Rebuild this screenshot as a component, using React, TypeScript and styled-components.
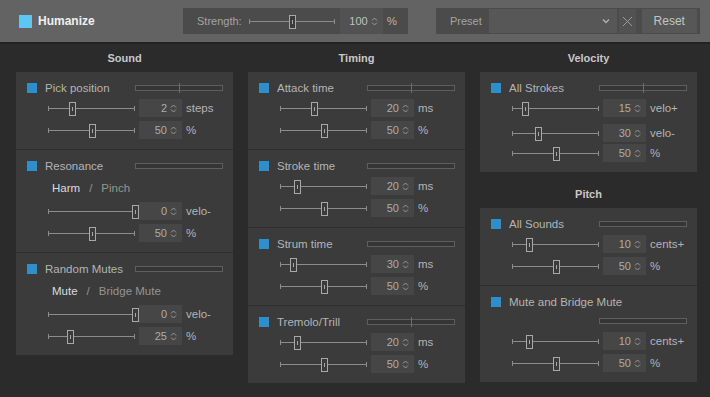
import React from "react"
import styled, { createGlobalStyle } from "styled-components"

const GlobalStyle = createGlobalStyle`
  body {
    margin: 0;
    background: #2b2b2b;
    font-family: "Liberation Sans", Arial, sans-serif;
    font-size: 11px;
    color: #b0b0b0;
  }
`

const Window = styled.div`
  width: 710px;
  height: 397px;
  overflow: hidden;
  background: #2b2b2b;
`
const TopBar = styled.div`
  height: 42px;
  background: #636363;
  border-bottom: 2px solid #232323;
  display: flex;
  align-items: center;
`
const Humanize = styled.div`
  width: 183px;
  padding-left: 19px;
  box-sizing: border-box;
  display: flex;
  align-items: center;
  gap: 6px;
  color: #f0f0f0;
  font-weight: bold;
  font-size: 12px;
`
const BigCheck = styled.span`
  width: 13px;
  height: 13px;
  background: #5cc6f4;
`
const GroupBox = styled.div<{ $width: number; $gap?: number }>`
  width: ${(p) => p.$width}px;
  margin-left: ${(p) => p.$gap ?? 0}px;
  height: 26px;
  background: #4b4b4b;
  display: flex;
  align-items: center;
  padding-left: 14px;
  box-sizing: border-box;
  color: #a4a4a4;
`
const Spacer = styled.span<{ $w: number }>`
  width: ${(p) => p.$w}px;
  flex: none;
`
const TopSpin = styled.div`
  width: 43px;
  height: 26px;
  background: #525252;
  display: flex;
  align-items: center;
  justify-content: flex-end;
  padding-right: 5px;
  box-sizing: border-box;
  color: #c0c0c0;
  margin-left: 5px;
`
const Combo = styled.div`
  width: 128px;
  height: 24px;
  background: #575757;
  display: flex;
  align-items: center;
  justify-content: flex-end;
  padding-right: 7px;
  box-sizing: border-box;
`
const ClearButton = styled.div`
  width: 17px;
  height: 24px;
  margin-left: 2px;
  background: #525252;
  display: flex;
  align-items: center;
  justify-content: center;
`
const ResetButton = styled.div`
  width: 55px;
  height: 24px;
  margin-left: 6px;
  background: #575757;
  display: flex;
  align-items: center;
  justify-content: center;
  color: #c4c4c4;
  font-size: 12px;
`
const Main = styled.div`
  display: grid;
  grid-template-columns: repeat(3, 217px);
  column-gap: 15px;
  padding: 0 16px;
  align-items: start;
`
const Column = styled.div`
  display: flex;
  flex-direction: column;
`
const ColumnTitle = styled.div<{ $top?: number }>`
  height: 28px;
  line-height: 29px;
  margin-top: ${(p) => p.$top ?? 0}px;
  text-align: center;
  font-weight: bold;
  color: #c8c8c8;
`
const Panel = styled.div`
  background: #3b3b3b;
`
const SectionBox = styled.div`
  padding: 8px 0 10px;
  & + & {
    border-top: 1px solid #2e2e2e;
  }
`
const Header = styled.div`
  height: 16px;
  display: flex;
  align-items: center;
`
const Check = styled.span`
  width: 10px;
  height: 10px;
  margin-left: 11px;
  background: #2f8fcd;
  flex: none;
`
const Label = styled.span`
  margin-left: 8px;
  flex: 1;
  color: #b4b4b4;
  font-size: 11.5px;
`
const RangeBar = styled.div`
  position: relative;
  width: 88px;
  height: 6px;
  margin-right: 10px;
  border: 1px solid #5e5e5e;
  background: #353535;
  box-sizing: border-box;
`
const RangeTick = styled.span`
  position: absolute;
  left: 43px;
  top: -3px;
  width: 1px;
  height: 10px;
  background: #6e6e6e;
`
const BarRow = styled.div`
  height: 16px;
  margin-top: 3px;
  display: flex;
  align-items: center;
  justify-content: flex-end;
`
const Body = styled.div`
  display: flex;
  flex-direction: column;
  gap: 4px;
  margin-top: 3px;
`
const SubLabel = styled.div`
  height: 21px;
  display: flex;
  align-items: center;
  padding-left: 36px;
  color: #949494;
  font-size: 11.5px;
`
const Active = styled.span`
  color: #dcdcdc;
`
const Slash = styled.span`
  margin: 0 9px;
`
const Row = styled.div<{ $extra?: number }>`
  height: 18px;
  display: flex;
  align-items: center;
  padding-left: 32px;
  margin-top: ${(p) => p.$extra ?? 0}px;
`
const Track = styled.div<{ $width: number }>`
  position: relative;
  width: ${(p) => p.$width}px;
  height: 18px;
  flex: none;
  &::before {
    content: "";
    position: absolute;
    left: 0;
    right: 0;
    top: 9px;
    height: 1px;
    background: #8c8c8c;
  }
  &::after {
    content: "";
    position: absolute;
    left: 0;
    right: 0;
    top: 7px;
    height: 5px;
    border-left: 1px solid #8c8c8c;
    border-right: 1px solid #8c8c8c;
  }
`
const Thumb = styled.span`
  position: absolute;
  top: 3px;
  width: 5px;
  height: 12px;
  margin-left: -3px;
  border: 1px solid #a8a8a8;
  background: #3b3b3b;
  z-index: 1;
  &::after {
    content: "";
    position: absolute;
    left: 2px;
    top: 4px;
    width: 1px;
    height: 4px;
    background: #a8a8a8;
  }
`
const Spin = styled.div`
  width: 43px;
  height: 18px;
  margin-left: 4px;
  background: #464646;
  display: flex;
  align-items: center;
  justify-content: flex-end;
  padding-right: 5px;
  box-sizing: border-box;
  color: #acacac;
  flex: none;
`
const Unit = styled.span`
  margin-left: 4px;
  color: #b4b4b4;
  font-size: 11.5px;
`

const Arrows = () => (
  <svg width="7" height="9" viewBox="0 0 7 9" style={{ marginLeft: 3 }}>
    <path d="M1 3.5 L3.5 1 L6 3.5 M1 5.5 L3.5 8 L6 5.5" fill="none" stroke="#9a9a9a" strokeWidth="1" />
  </svg>
)

const Slider = ({ pos, width = 87 }: { pos: number; width?: number }) => (
  <Track $width={width}>
    <Thumb style={{ left: `${pos * 100}%` }} />
  </Track>
)

interface RowData {
  pos: number
  value: string
  unit: string
  extra?: number
}
interface SectionData {
  name: string
  tick?: boolean
  barBelow?: boolean
  sub?: [string, string]
  rows: RowData[]
}

const Section = ({ data }: { data: SectionData }) => (
  <SectionBox>
    <Header>
      <Check />
      <Label>{data.name}</Label>
      {!data.barBelow && <RangeBar>{data.tick && <RangeTick />}</RangeBar>}
    </Header>
    {data.barBelow && (
      <BarRow>
        <RangeBar />
      </BarRow>
    )}
    <Body>
      {data.sub && (
        <SubLabel>
          <Active>{data.sub[0]}</Active>
          <Slash>/</Slash>
          {data.sub[1]}
        </SubLabel>
      )}
      {data.rows.map((r, i) => (
        <Row key={i} $extra={r.extra}>
          <Slider pos={r.pos} />
          <Spin>
            {r.value}
            <Arrows />
          </Spin>
          <Unit>{r.unit}</Unit>
        </Row>
      ))}
    </Body>
  </SectionBox>
)

const sound: SectionData[] = [
  {
    name: "Pick position",
    tick: true,
    rows: [
      { pos: 0.28, value: "2", unit: "steps" },
      { pos: 0.5, value: "50", unit: "%" },
    ],
  },
  {
    name: "Resonance",
    sub: ["Harm", "Pinch"],
    rows: [
      { pos: 1, value: "0", unit: "velo-" },
      { pos: 0.5, value: "50", unit: "%" },
    ],
  },
  {
    name: "Random Mutes",
    sub: ["Mute", "Bridge Mute"],
    rows: [
      { pos: 1, value: "0", unit: "velo-" },
      { pos: 0.25, value: "25", unit: "%" },
    ],
  },
]

const timing: SectionData[] = [
  {
    name: "Attack time",
    tick: true,
    rows: [
      { pos: 0.39, value: "20", unit: "ms" },
      { pos: 0.5, value: "50", unit: "%" },
    ],
  },
  {
    name: "Stroke time",
    rows: [
      { pos: 0.2, value: "20", unit: "ms" },
      { pos: 0.5, value: "50", unit: "%" },
    ],
  },
  {
    name: "Strum time",
    rows: [
      { pos: 0.15, value: "30", unit: "ms" },
      { pos: 0.5, value: "50", unit: "%" },
    ],
  },
  {
    name: "Tremolo/Trill",
    tick: true,
    rows: [
      { pos: 0.2, value: "20", unit: "ms" },
      { pos: 0.5, value: "50", unit: "%" },
    ],
  },
]

const velocity: SectionData[] = [
  {
    name: "All Strokes",
    tick: true,
    rows: [
      { pos: 0.15, value: "15", unit: "velo+" },
      { pos: 0.3, value: "30", unit: "velo-", extra: 3 },
      { pos: 0.5, value: "50", unit: "%", extra: -2 },
    ],
  },
]

const pitch: SectionData[] = [
  {
    name: "All Sounds",
    rows: [
      { pos: 0.2, value: "10", unit: "cents+" },
      { pos: 0.5, value: "50", unit: "%" },
    ],
  },
  {
    name: "Mute and Bridge Mute",
    barBelow: true,
    rows: [
      { pos: 0.2, value: "10", unit: "cents+" },
      { pos: 0.5, value: "50", unit: "%" },
    ],
  },
]

const Group = ({ title, sections, top }: { title: string; sections: SectionData[]; top?: number }) => (
  <>
    <ColumnTitle $top={top}>{title}</ColumnTitle>
    <Panel>
      {sections.map((s) => (
        <Section key={s.name} data={s} />
      ))}
    </Panel>
  </>
)

export default function App() {
  return (
    <Window>
      <GlobalStyle />
      <TopBar>
        <Humanize>
          <BigCheck />
          Humanize
        </Humanize>
        <GroupBox $width={225}>
          Strength:
          <Spacer $w={7} />
          <Slider pos={0.5} width={86} />
          <TopSpin>
            100
            <Arrows />
          </TopSpin>
          <Unit>%</Unit>
        </GroupBox>
        <GroupBox $width={264} $gap={28}>
          Preset
          <Spacer $w={7} />
          <Combo>
            <svg width="8" height="6" viewBox="0 0 8 6">
              <path d="M1 1.5 L4 4.5 L7 1.5" fill="none" stroke="#b0b0b0" strokeWidth="1.4" />
            </svg>
          </Combo>
          <ClearButton>
            <svg width="11" height="11" viewBox="0 0 11 11">
              <path d="M1 1 L10 10 M10 1 L1 10" stroke="#9a9a9a" strokeWidth="1" />
            </svg>
          </ClearButton>
          <ResetButton>Reset</ResetButton>
        </GroupBox>
      </TopBar>
      <Main>
        <Column>
          <Group title="Sound" sections={sound} />
        </Column>
        <Column>
          <Group title="Timing" sections={timing} />
        </Column>
        <Column>
          <Group title="Velocity" sections={velocity} />
          <Group title="Pitch" sections={pitch} top={8} />
        </Column>
      </Main>
    </Window>
  )
}
